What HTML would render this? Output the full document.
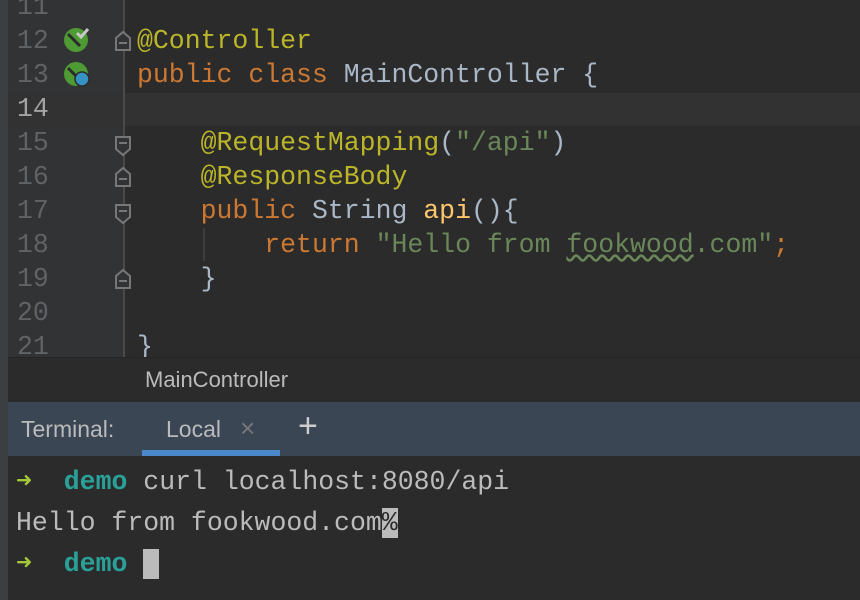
<!DOCTYPE html>
<html><head><style>
body{margin:0;width:860px;height:600px;overflow:hidden;background:#2b2b2b;position:relative;font-family:"Liberation Mono",monospace}
.strip{position:absolute;left:0;top:0;width:8px;height:600px;background:#3c3f41}
.gut{position:absolute;left:8px;top:0;width:117px;height:357px;background:#313335}
.vl{position:absolute;left:123px;top:0;width:2px;height:357px;background:#4a4a4a}
.cur{position:absolute;left:8px;top:93px;width:852px;height:33px;background:#323232}
.ln{position:absolute;left:17px;width:40px;font-size:26.5px;color:#606366;line-height:34px}
.code{position:absolute;left:137px;font-size:26.5px;line-height:34px;color:#a9b7c6;white-space:pre}
.a{color:#bbb529}.k{color:#cc7832}.s{color:#6a8759}.m{color:#ffc66d}
.bc{position:absolute;left:8px;top:357px;width:852px;height:45px;background:#2b2b2b;border-top:1px solid #252525;font-family:"Liberation Sans",sans-serif;font-size:22px;color:#bbb;box-sizing:border-box;padding:9px 0 0 137px}
.tb{position:absolute;left:8px;top:402px;width:852px;height:54px;background:#3b4655;font-family:"Liberation Sans",sans-serif;font-size:23px;color:#bbb}
.term{position:absolute;left:16px;font-size:26.5px;color:#bbbbbb;white-space:pre;line-height:41px}
.g{color:#a4c639}.t{color:#2aa198;font-weight:bold}
</style></head><body>
<div class="strip"></div><div class="gut"></div><div class="cur"></div><div class="vl"></div>
<div class="ln" style="top:-10px">11</div>
<div class="ln" style="top:24px">12</div>
<div class="ln" style="top:58px">13</div>
<div class="ln" style="top:92px;color:#a4a3a3">14</div>
<div class="ln" style="top:126px">15</div>
<div class="ln" style="top:160px">16</div>
<div class="ln" style="top:194px">17</div>
<div class="ln" style="top:228px">18</div>
<div class="ln" style="top:262px">19</div>
<div class="ln" style="top:296px">20</div>
<div class="ln" style="top:330px">21</div>
<svg style="position:absolute;left:62px;top:26px" width="30" height="62">
<circle cx="14" cy="14" r="12" fill="#4e9a35"/><path d="M6 8 L18 20" stroke="#2b2b2b" stroke-width="3"/><path d="M15 7 l4 4 l7 -8" stroke="#c8c8c8" stroke-width="3" fill="none"/>
<circle cx="14" cy="48" r="12" fill="#4e9a35"/><path d="M6 42 L16 52" stroke="#2b2b2b" stroke-width="3"/><circle cx="20" cy="53" r="7" fill="#3592c4" stroke="#2b2b2b" stroke-width="1.5"/>
</svg>
<svg style="position:absolute;left:114px;top:0" width="20" height="357" stroke="#777" stroke-width="2" fill="#313335">
<path d="M2 50 V38 L9 32 L16 38 V50 Z"/><path d="M5 43h8"/>
<path d="M2 137 V149 L9 155 L16 149 V137 Z"/><path d="M5 143h8"/>
<path d="M2 186 V174 L9 168 L16 174 V186 Z"/><path d="M5 179h8"/>
<path d="M2 205 V217 L9 223 L16 217 V205 Z"/><path d="M5 211h8"/>
<path d="M2 288 V276 L9 270 L16 276 V288 Z"/><path d="M5 281h8"/>
</svg>
<div style="position:absolute;left:203px;top:228px;width:2px;height:33px;background:#3d3d3d"></div>
<div class="code" style="top:24px"><span class="a">@Controller</span>
<span class="k">public class </span>MainController {

    <span class="a">@RequestMapping</span>(<span class="s">"/api"</span>)
    <span class="a">@ResponseBody</span>
    <span class="k">public </span>String <span class="m">api</span>(){
        <span class="k">return </span><span class="s">"Hello from <span style="text-decoration:underline wavy #6a8759">fookwood</span>.com"</span><span class="k">;</span>
    }

}</div>
<div class="bc">MainController</div>
<div class="tb">
<span style="position:absolute;left:13px;top:14px">Terminal:</span>
<span style="position:absolute;left:158px;top:14px">Local</span>
<span style="position:absolute;left:232px;top:11px;color:#777;font-size:26px">×</span>
<span style="position:absolute;left:290px;top:5px;font-size:34px;color:#ccc">+</span>
<div style="position:absolute;left:134px;top:48px;width:138px;height:6px;background:#4a88c7"></div>
</div>
<div class="term" style="top:462px"><span class="g">➜</span>  <span class="t">demo</span> curl localhost:8080/api
Hello from fookwood.com<span style="background:#bbb;color:#2b2b2b">%</span>
<span class="g">➜</span>  <span class="t">demo</span> <span style="background:#bbb"> </span></div>
</body></html>
